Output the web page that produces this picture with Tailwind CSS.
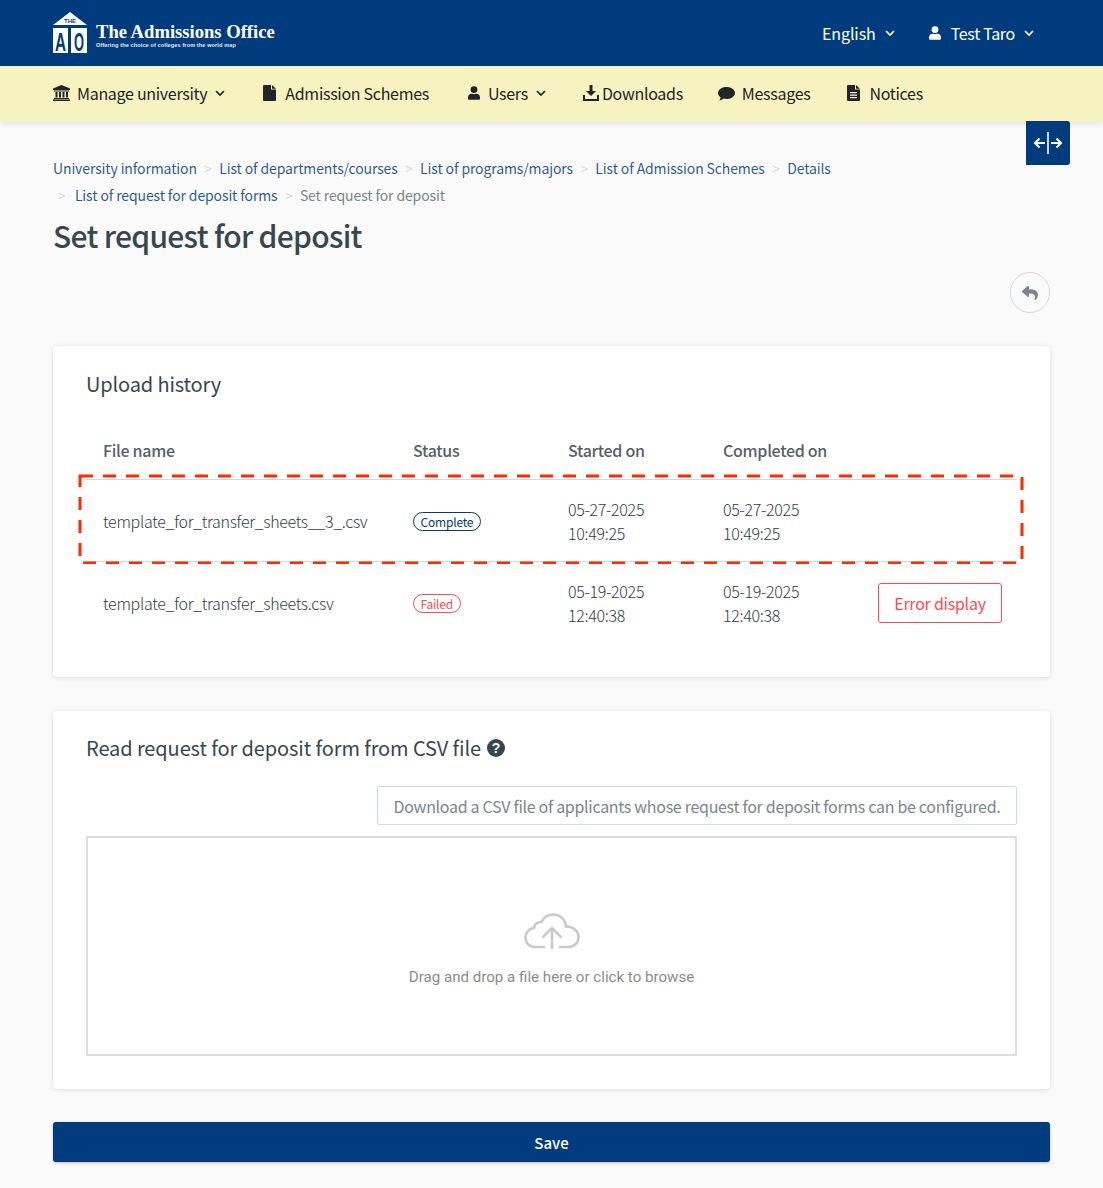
<!DOCTYPE html>
<html lang="en"><head><meta charset="utf-8">
<script src="https://cdn.jsdelivr.net/npm/@tailwindcss/browser@4"></script>
<title>Set request for deposit</title></head>
<body class="bg-[#fafafa] font-['Noto_Sans_CJK_JP','Noto_Sans',sans-serif] text-[#37474f]">
<div class="relative w-[1103px] h-[1188px] overflow-hidden">
<header class="h-[66px] bg-[#003c7d] flex items-center justify-between pl-[53px] pr-[69px] text-white">
  <div class="flex items-center gap-[9px]">
    <svg width="38" height="47" viewBox="0 0 38 47" class="mt-[-2px] mb-[-6px] mr-[-4px]">
      <path d="M17 0 L34 13 L0 13 Z" fill="#fff"/>
      <rect x="0" y="16" width="15" height="25" fill="#fff"/><rect x="18" y="16" width="16" height="25" fill="#fff"/>
      <text x="17" y="11" text-anchor="middle" font-size="6" font-weight="700" fill="#003c7d" font-family="Liberation Sans">THE</text>
      <text x="7.500" y="39" text-anchor="middle" font-size="26" font-weight="700" fill="#003c7d" font-family="Liberation Sans" textLength="11" lengthAdjust="spacingAndGlyphs">A</text>
      <text x="26" y="39" text-anchor="middle" font-size="26" font-weight="700" fill="#003c7d" font-family="Liberation Sans" textLength="10" lengthAdjust="spacingAndGlyphs">O</text>
    </svg>
    <div class="flex flex-col mt-[3px]">
      <span class="font-['Liberation_Serif',serif] font-bold text-[18.600px] leading-[21px] whitespace-nowrap">The Admissions Office</span>
      <span class="font-['Liberation_Sans',sans-serif] font-bold text-[5.500px] leading-[7px] tracking-[0.14px] text-white/90 whitespace-nowrap">Offering the choice of colleges from the world map</span>
    </div>
  </div>
  <div class="flex items-center text-[16px]">
    <span class="tracking-[-0.1px]">English</span>
    <svg class="ml-[9px]" width="10" height="7" viewBox="0 0 10 7" fill="none" stroke="#fff" stroke-width="1.7"><path d="M1 1l4 4 4-4"/></svg>
    <svg class="ml-[34px]" width="12" height="14" viewBox="0 0 448 512" fill="#fff"><path d="M224 256a128 128 0 100-256 128 128 0 000 256zm90 32h-17a174 174 0 01-146 0h-17C60 288 0 348 0 422v42c0 26 22 48 48 48h352c26 0 48-22 48-48v-42c0-74-60-134-134-134z"/></svg>
    <span class="ml-[10px] tracking-[-0.3px]">Test Taro</span>
    <svg class="ml-[9px]" width="10" height="7" viewBox="0 0 10 7" fill="none" stroke="#fff" stroke-width="1.7"><path d="M1 1l4 4 4-4"/></svg>
  </div>
</header>
<nav class="h-[56px] bg-[#f7f3c1] shadow-[0_2px_6px_rgba(0,0,0,0.08)] flex items-center pl-[53px] pb-[2px] text-[16px] tracking-[-0.3px] text-[#212529]">
  <svg width="17" height="16" viewBox="0 0 17 16" fill="#212529"><path d="M8.500 0L17 3.500V5H0V3.500z"/><rect x="1" y="5.500" width="15" height="1"/><rect x="2.500" y="7" width="2" height="5.500"/><rect x="6" y="7" width="2" height="5.500"/><rect x="9.500" y="7" width="2" height="5.500"/><rect x="13" y="7" width="2" height="5.500"/><rect x="1" y="13" width="15" height="1"/><rect x="0" y="14.500" width="17" height="1.500"/></svg>
  <span class="ml-[7px]">Manage university</span>
  <svg class="ml-[8px]" width="10" height="7" viewBox="0 0 10 7" fill="none" stroke="#212529" stroke-width="1.7"><path d="M1 1l4 4 4-4"/></svg>
  <svg class="ml-[38px]" width="13" height="16" viewBox="0 0 13 16" fill="#212529"><path d="M0 1a1 1 0 011-1h7v4.500h5V15a1 1 0 01-1 1H1a1 1 0 01-1-1z"/><path d="M9 0l4 3.700H9z"/></svg>
  <span class="ml-[9px]">Admission Schemes</span>
  <svg class="ml-[39px]" width="12" height="14" viewBox="0 0 448 512" fill="#212529"><path d="M224 256a128 128 0 100-256 128 128 0 000 256zm90 32h-17a174 174 0 01-146 0h-17C60 288 0 348 0 422v42c0 26 22 48 48 48h352c26 0 48-22 48-48v-42c0-74-60-134-134-134z"/></svg>
  <span class="ml-[8px]">Users</span>
  <svg class="ml-[8px]" width="10" height="7" viewBox="0 0 10 7" fill="none" stroke="#212529" stroke-width="1.7"><path d="M1 1l4 4 4-4"/></svg>
  <svg class="ml-[37px]" width="16" height="16" viewBox="0 0 16 16" fill="#212529"><path d="M6.500 0h3v6H13L8 11 3 6h3.500z"/><path d="M0 10h2v4h12v-4h2v6H0z"/></svg>
  <span class="ml-[3px]">Downloads</span>
  <svg class="ml-[35px]" width="17" height="15" viewBox="0 0 17 15" fill="#212529"><path d="M8.500 1C13.200 1 17 3.700 17 7s-3.800 6-8.500 6c-1 0-2-.1-2.900-.4C4.500 13.500 3 14.300 1 14.500c.8-.8 1.500-2 1.700-3.100C1 10.300 0 8.700 0 7c0-3.300 3.800-6 8.500-6z"/></svg>
  <span class="ml-[7px]">Messages</span>
  <svg class="ml-[37px]" width="13" height="16" viewBox="0 0 13 16"><path fill="#212529" d="M0 1a1 1 0 011-1h7v4.500h5V15a1 1 0 01-1 1H1a1 1 0 01-1-1z"/><path fill="#212529" d="M9 0l4 3.700H9z"/><path fill="#f7f3c1" d="M3 7h7v1.200H3zM3 9.500h7v1.200H3zM3 12h7v1.200H3z"/></svg>
  <span class="ml-[9px]">Notices</span>
</nav>
<button class="absolute left-[1026px] top-[121px] w-[44px] h-[44px] bg-[#003c7d] rounded-br-[3px] rounded-tr-[3px] flex items-center justify-center">
  <svg width="30" height="24" viewBox="0 0 30 24" fill="none" stroke="#fff" stroke-width="2"><path d="M15 1v22" stroke-width="1.600"/><path d="M12 12H2M6.500 7.500L2 12l4.500 4.500M18 12h10M23.500 7.500L28 12l-4.500 4.500"/></svg>
</button>
<main class="px-[53px]">
  <div class="pt-[33px] text-[14px] leading-[27px] tracking-[-0.12px] text-[#003c7d]/85">
    <div class="flex items-center whitespace-nowrap">
      <span>University information</span><span class="text-[#c8ccd0] mx-[7.500px] font-light">&gt;</span>
      <span>List of departments/courses</span><span class="text-[#c8ccd0] mx-[7.500px] font-light">&gt;</span>
      <span>List of programs/majors</span><span class="text-[#c8ccd0] mx-[7.500px] font-light">&gt;</span>
      <span>List of Admission Schemes</span><span class="text-[#c8ccd0] mx-[7.500px] font-light">&gt;</span>
      <span>Details</span>
    </div>
    <div class="flex items-center whitespace-nowrap pl-[5px]">
      <span class="text-[#c8ccd0] mr-[9.500px] font-light">&gt;</span>
      <span>List of request for deposit forms</span><span class="text-[#c8ccd0] mx-[7.500px] font-light">&gt;</span>
      <span class="text-[#78868e]">Set request for deposit</span>
    </div>
  </div>
  <h1 class="mt-[5px] text-[30px] leading-[42px] tracking-[-0.7px] font-medium text-[#37474f]">Set request for deposit</h1>
  <div class="flex justify-end mt-[16px]">
    <button class="w-[40px] h-[41px] rounded-full border border-[#cfd8dc] flex items-center justify-center">
      <svg width="16" height="14" viewBox="0 0 512 448" fill="#78868e"><path d="M8 151L184 3c16-13 40-2 40 19v80c160 2 288 34 288 187 0 62-40 123-84 155-14 10-33-3-28-19 45-146-21-184-176-186v86c0 21-24 32-40 19L8 197c-11-10-11-36 0-46z"/></svg>
    </button>
  </div>
  <section class="mt-[33px] h-[331px] bg-white rounded-[4px] shadow-[0_1px_5px_rgba(0,0,0,0.12)] px-[33px] pt-[23px]">
    <h2 class="text-[20px] leading-[30px] tracking-[-0.15px] text-[#37474f]">Upload history</h2>
    <div class="mt-[27px] text-[16px] tracking-[-0.3px]">
      <div class="grid grid-cols-[310px_155px_155px_155px_1fr] pl-[17px] h-[54px] pb-[6px] items-center font-medium text-[#546169] border-b border-[#cfd8dc]">
        <span>File name</span><span>Status</span><span>Started on</span><span>Completed on</span><span></span>
      </div>
      <div class="grid grid-cols-[310px_155px_155px_155px_1fr] pl-[17px] h-[82px] items-center border-b border-[#cfd8dc] leading-[24px] text-[#2f3c44]">
        <span class="font-light">template_for_transfer_sheets__3_.csv</span>
        <span class="pb-[2px]"><span class="inline-block border border-[#003c7d] text-[#003c7d] rounded-full px-[6.500px] text-[12px] tracking-[-0.2px] leading-[17px]">Complete</span></span>
        <span class="font-light">05-27-2025<br>10:49:25</span>
        <span class="font-light">05-27-2025<br>10:49:25</span><span></span>
      </div>
      <div class="grid grid-cols-[310px_155px_155px_155px_1fr] pl-[17px] h-[82px] items-center leading-[24px] text-[#2f3c44]">
        <span class="font-light">template_for_transfer_sheets.csv</span>
        <span class="pb-[2px]"><span class="inline-block border border-[#ff4a55] text-[#ff4a55] rounded-full px-[6.500px] text-[12px] tracking-[-0.2px] leading-[17px]">Failed</span></span>
        <span class="font-light">05-19-2025<br>12:40:38</span>
        <span class="font-light">05-19-2025<br>12:40:38</span>
        <span><button class="w-[124px] h-[40px] border border-[#ff4a55] rounded-[3px] text-[#ff4a55] text-[16px] tracking-[-0.25px]">Error display</button></span>
      </div>
    </div>
  </section>
  <section class="mt-[34px] h-[378px] bg-white rounded-[4px] shadow-[0_1px_5px_rgba(0,0,0,0.12)] px-[33px] pt-[22px]">
    <h2 class="text-[20px] leading-[30px] tracking-[-0.1px] text-[#37474f] flex items-center gap-[6px]">Read request for deposit form from CSV file
      <svg width="18" height="18" viewBox="0 0 18 18"><circle cx="9" cy="9" r="9" fill="#37474f"/><text x="9" y="14" text-anchor="middle" font-size="14" font-weight="700" fill="#fff" font-family="Liberation Sans">?</text></svg>
    </h2>
    <div class="flex justify-end mt-[23px]">
      <button class="w-[640px] h-[39px] border border-[#cfd8dc] rounded-[2px] text-[16px] tracking-[-0.3px] text-[#78868e] whitespace-nowrap">Download a CSV file of applicants whose request for deposit forms can be configured.</button>
    </div>
    <div class="mt-[11px] h-[220px] border-2 border-[#dedede] flex flex-col items-center pt-[75px] font-['Roboto',sans-serif] text-[15.100px] text-[#8c8c8c]">
      <svg width="56" height="37" viewBox="0 0 56 37" fill="none" stroke="#c9c9c9" stroke-width="2.600"><path d="M21 34H11C5 34 1.500 29.500 1.500 24.500c0-5 3.500-9 8.500-9.500 .5-4 4-6.500 7.500-6C20 4 24.500 1.500 29 1.500c7 0 12.500 5 13 12 7 0 12.500 4.500 12.500 10.500S50 34 44 34H35"/><path d="M28 36V15M18.500 24.500L28 15l9.500 9.500"/></svg>
      <p class="mt-[16px] leading-[22px]">Drag and drop a file here or click to browse</p>
    </div>
  </section>
  <button class="block mt-[33px] pt-[2px] w-[997px] h-[40px] bg-[#003c7d] rounded-[3px] shadow-[0_1px_3px_rgba(0,0,0,0.25)] text-white font-medium text-[15px]">Save</button>
</main>
<svg class="absolute left-[78px] top-[474px]" width="946" height="90" viewBox="0 0 946 90" fill="none"><rect x="2" y="2" width="942" height="87" stroke="#ff2a00" stroke-width="3" stroke-dasharray="13 10"/></svg>
</div>
</body></html>
